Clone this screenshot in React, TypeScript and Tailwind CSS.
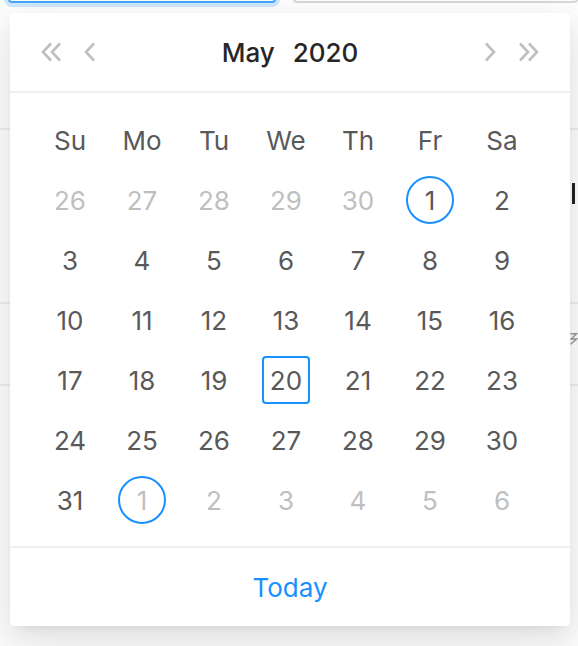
import React from "react";

const Chevron = ({ dir, double }: { dir: "l" | "r"; double?: boolean }) => {
  const w = double ? 22 : 13;
  const paths: string[] = [];
  if (dir === "l") {
    if (double) {
      paths.push("M11 1.5 L3 10 L11 18.5");
      paths.push("M20 1.5 L12 10 L20 18.5");
    } else {
      paths.push("M11 1.5 L3 10 L11 18.5");
    }
  } else {
    if (double) {
      paths.push("M2 1.5 L10 10 L2 18.5");
      paths.push("M11 1.5 L19 10 L11 18.5");
    } else {
      paths.push("M2 1.5 L10 10 L2 18.5");
    }
  }
  return (
    <svg width={w} height={20} viewBox={`0 0 ${w} 20`} fill="none">
      {paths.map((d, i) => (
        <path key={i} d={d} stroke="#bfbfbf" strokeWidth={2.6} />
      ))}
    </svg>
  );
};

type Cell = { n: number; out?: boolean; circle?: boolean; box?: boolean };

const rows: Cell[][] = [
  [{ n: 26, out: true }, { n: 27, out: true }, { n: 28, out: true }, { n: 29, out: true }, { n: 30, out: true }, { n: 1, circle: true }, { n: 2 }],
  [{ n: 3 }, { n: 4 }, { n: 5 }, { n: 6 }, { n: 7 }, { n: 8 }, { n: 9 }],
  [{ n: 10 }, { n: 11 }, { n: 12 }, { n: 13 }, { n: 14 }, { n: 15 }, { n: 16 }],
  [{ n: 17 }, { n: 18 }, { n: 19 }, { n: 20, box: true }, { n: 21 }, { n: 22 }, { n: 23 }],
  [{ n: 24 }, { n: 25 }, { n: 26 }, { n: 27 }, { n: 28 }, { n: 29 }, { n: 30 }],
  [{ n: 31 }, { n: 1, out: true, circle: true }, { n: 2, out: true }, { n: 3, out: true }, { n: 4, out: true }, { n: 5, out: true }, { n: 6, out: true }],
];

const weekdays = ["Su", "Mo", "Tu", "We", "Th", "Fr", "Sa"];

export default function App() {
  return (
    <div
      className="relative w-[578px] h-[646px] overflow-hidden bg-white"
      style={{ fontFamily: "Inter, 'Liberation Sans', sans-serif" }}
    >
      {/* background page */}
      <div className="flex flex-col">
        <div className="flex -mt-[37px] h-[40px] pl-[8px] gap-[17px]">
          <div className="w-[268px] h-[40px] rounded-[4px] border-2 border-[#40a9ff] shadow-[0_0_0_4px_rgba(24,144,255,0.2)] bg-white" />
          <div className="flex-1 h-[40px] rounded-[4px] border-2 border-[#d9d9d9] bg-white" />
        </div>
        <div className="h-[125px]" />
        <div className="h-[2px] bg-[#f0f0f0]" />
        <div className="h-[172px] flex pl-[572px] pt-[53px]">
          <div className="w-[3px] h-[21px] bg-[#222]" />
        </div>
        <div className="h-[2px] bg-[#f0f0f0]" />
        <div className="h-[80px] flex pl-[569px] pt-[26px]">
          <svg width="12" height="18" viewBox="0 0 12 18" fill="none">
            <path d="M2 2 L10 2 L3 9 L10 9 L2 16" stroke="#9a9a9a" strokeWidth="2" />
          </svg>
        </div>
        <div className="h-[2px] bg-[#f0f0f0]" />
      </div>

      {/* popup */}
      <div className="absolute left-[10px] top-[13px] w-[560px] rounded-[4px] bg-white shadow-[0_6px_12px_-8px_rgba(0,0,0,0.12),0_12px_32px_0_rgba(0,0,0,0.08),0_18px_56px_16px_rgba(0,0,0,0.05)]">
        {/* header */}
        <div className="h-[80px] flex items-center px-[30px] border-b-2 border-[#f0f0f0]">
          <div className="flex items-center gap-[21px]">
            <Chevron dir="l" double />
            <Chevron dir="l" />
          </div>
          <div className="flex-1 flex justify-center gap-[18px] text-[26px] font-medium text-[#262626]">
            <span>May</span>
            <span>2020</span>
          </div>
          <div className="flex items-center gap-[21px]">
            <Chevron dir="r" />
            <Chevron dir="r" double />
          </div>
        </div>

        {/* body */}
        <div className="pl-[24px] pt-[17px] pb-[16px]">
          <div className="grid grid-cols-[repeat(7,72px)]">
            {weekdays.map((w) => (
              <div key={w} className="h-[60px] flex items-center justify-center text-[26px] text-[#595959]">
                {w}
              </div>
            ))}
            {rows.flat().map((c, i) => (
              <div key={i} className="h-[60px] flex items-center justify-center">
                <div
                  className={
                    "w-[48px] h-[48px] flex items-center justify-center text-[26px] " +
                    (c.out ? "text-[#bfbfbf] " : "text-[#595959] ") +
                    (c.circle ? "rounded-full border-2 border-[#1890ff] " : "") +
                    (c.box ? "rounded-[4px] border-2 border-[#1890ff] " : "")
                  }
                >
                  <span>{c.n}</span>
                </div>
              </div>
            ))}
          </div>
        </div>

        {/* footer */}
        <div className="h-[80px] border-t-2 border-[#f0f0f0] flex items-center justify-center">
          <span className="text-[26px] text-[#1890ff]">Today</span>
        </div>
      </div>
    </div>
  );
}
